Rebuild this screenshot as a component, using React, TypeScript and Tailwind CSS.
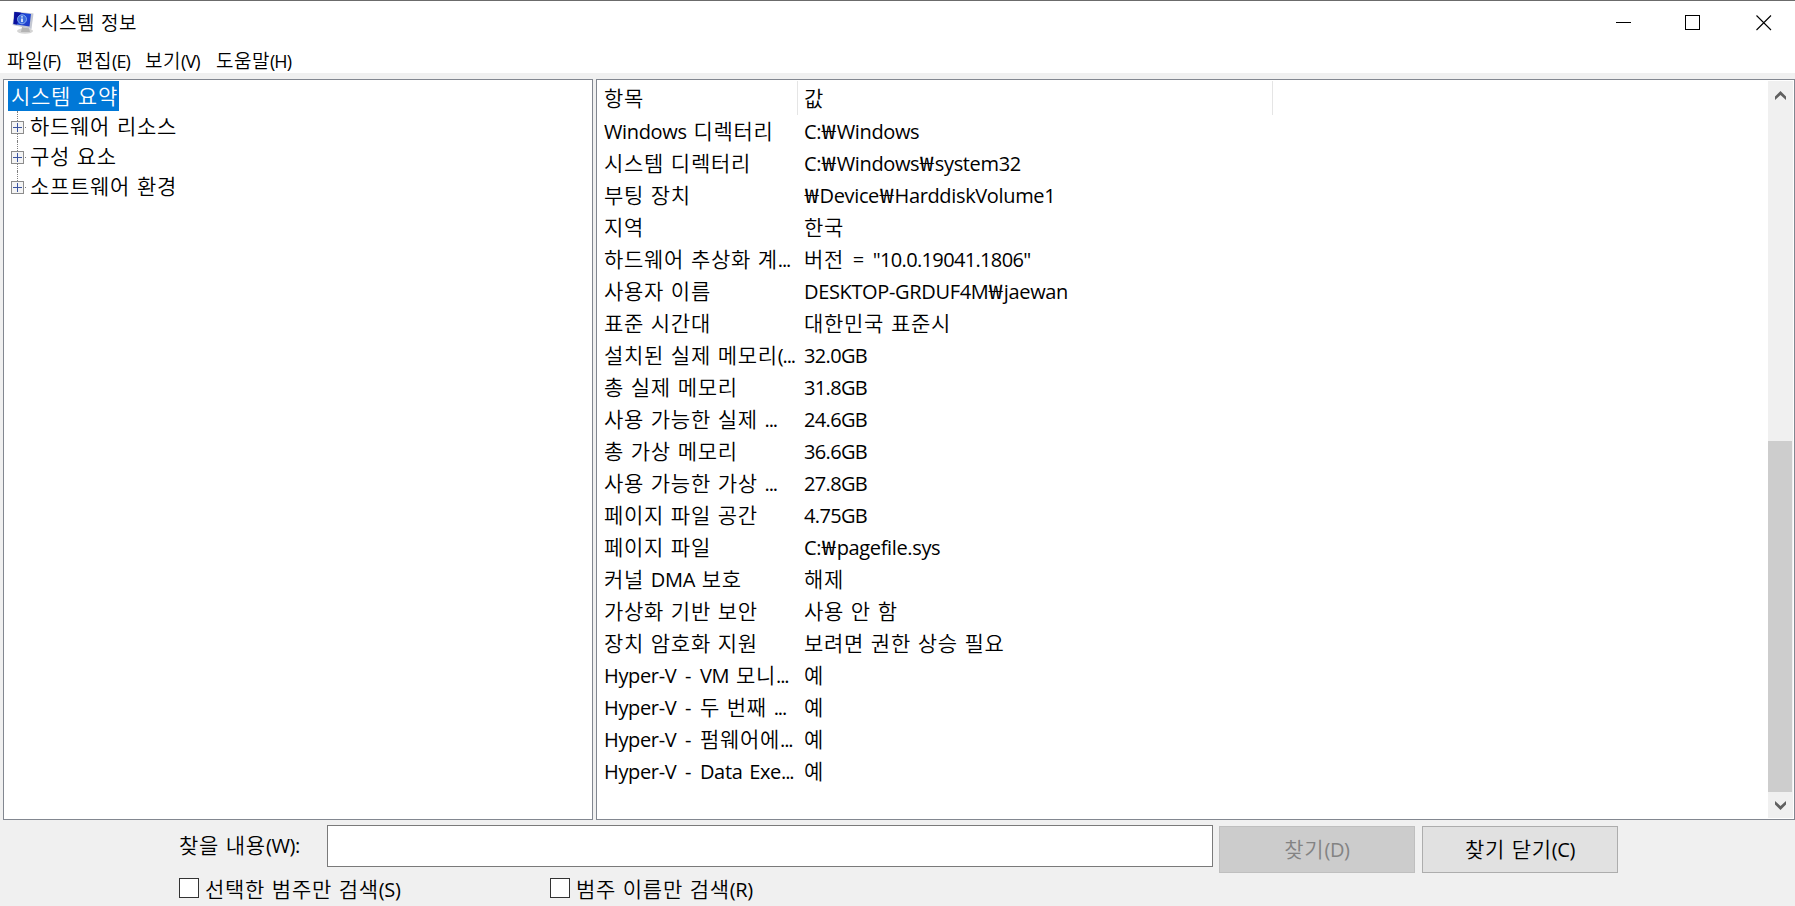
import clsx from 'clsx';

const menus = ['파일(F)', '편집(E)', '보기(V)', '도움말(H)'];
const menuWidths = ['w-[69px]', 'w-[69px]', 'w-[71px]', 'w-[90px]'];

const treeItems = ['하드웨어 리소스', '구성 요소', '소프트웨어 환경'];

const rows = [
  ['Windows 디렉터리', 'C:₩Windows'],
  ['시스템 디렉터리', 'C:₩Windows₩system32'],
  ['부팅 장치', '₩Device₩HarddiskVolume1'],
  ['지역', '한국'],
  ['하드웨어 추상화 계...', '버전 = "10.0.19041.1806"'],
  ['사용자 이름', 'DESKTOP-GRDUF4M₩jaewan'],
  ['표준 시간대', '대한민국 표준시'],
  ['설치된 실제 메모리(...', '32.0GB'],
  ['총 실제 메모리', '31.8GB'],
  ['사용 가능한 실제 ...', '24.6GB'],
  ['총 가상 메모리', '36.6GB'],
  ['사용 가능한 가상 ...', '27.8GB'],
  ['페이지 파일 공간', '4.75GB'],
  ['페이지 파일', 'C:₩pagefile.sys'],
  ['커널 DMA 보호', '해제'],
  ['가상화 기반 보안', '사용 안 함'],
  ['장치 암호화 지원', '보려면 권한 상승 필요'],
  ['Hyper-V - VM 모니...', '예'],
  ['Hyper-V - 두 번째 ...', '예'],
  ['Hyper-V - 펌웨어에...', '예'],
  ['Hyper-V - Data Exe...', '예'],
];

type TextSize = 'sm' | 'md';

const hangulStyles: Record<TextSize, string> = {
  sm: 'text-[19px] tracking-[0.5px]',
  md: 'text-[21px] tracking-[0.7px]',
};

function latinStyle(run: string, size: TextSize) {
  if (size === 'sm') return run.trim() ? 'text-[18px] tracking-[-0.9px]' : 'text-[18px] tracking-[1.3px]';
  if (!run.trim()) return 'text-[20px] tracking-[1.6px]';
  if (run === '₩') return 'inline-block w-[15.5px] scale-x-[1.25] text-center text-[20px]';
  if (run === '-' || run === '=') return 'mx-[1.8px] text-[20px]';
  if (run.endsWith('...')) return 'text-[20px] tracking-[-1.1px]';
  if (/^"?\d/.test(run)) return 'text-[20px] tracking-[-0.65px]';
  return 'text-[20px] tracking-[-0.35px]';
}

// Hangul and Latin runs have different metrics, so each gets its own span.
// Zero leading keeps the baseline tied to the parent line only.
function Text({ children, size = 'md' }: { children: string; size?: TextSize }) {
  const runs = children.match(/[가-힣]+| +|₩|\(?\.\.\.|[^가-힣₩ .]+(\.[^가-힣₩ .]+)*/g) || [];
  return (
    <span className="whitespace-pre">
      {runs.map((run, i) => (
        <span
          key={i}
          className={
            /[가-힣]/.test(run)
              ? clsx("leading-[0] [font-family:'Noto_Sans_CJK_KR_DemiLight','Noto_Sans_CJK_KR',sans-serif]", hangulStyles[size])
              : run === '₩'
                ? clsx("leading-[0] [font-family:'Noto_Sans_CJK_KR',sans-serif]", latinStyle(run, size))
                : clsx("leading-[0] [font-family:'Open_Sans',sans-serif]", latinStyle(run, size))
          }
        >
          {run}
        </span>
      ))}
    </span>
  );
}

function AppIcon() {
  return (
    <svg width="22" height="24" viewBox="0 0 22 24">
      <defs>
        <linearGradient id="screen" x1="0" y1="0" x2="1" y2="1">
          <stop offset="0" stopColor="#1020b0" />
          <stop offset="0.5" stopColor="#1c48d8" />
          <stop offset="1" stopColor="#2438c0" />
        </linearGradient>
      </defs>
      <ellipse cx="13" cy="20" rx="8" ry="2.800" fill="#d4d4d4" />
      <path d="M10 16l7 1 1 4H9z" fill="#b4b4b4" />
      <path d="M2 .5L21.500 2.500l-2 15.500L.5 14z" fill="#c4c8d2" />
      <path d="M2.500 1L19 3 17.500 15.500 1.500 13z" fill="url(#screen)" />
      <path d="M2.500 1L9 1.800 5 13.500 1.500 13z" fill="#0a109c" />
      <circle cx="10" cy="8.300" r="4.500" fill="#3c6cdc" stroke="#8cb0f0" strokeWidth="0.900" />
      <path d="M10 7.600v3.400M10 5.300v1.200" stroke="#fff" strokeWidth="1.500" />
    </svg>
  );
}

function TitleBar() {
  return (
    <header className="flex h-[44px] items-start border-t border-[#6b6b6b] bg-white">
      <div className="pt-[10px] pl-[12px]">
        <AppIcon />
      </div>
      <h1 className="h-[43px] pl-[7px] leading-[44px]">
        <Text size="sm">시스템 정보</Text>
      </h1>
      <div className="ml-auto flex gap-[54px] pt-[14px] pr-[23px]">
        <svg width="16" height="16" shapeRendering="crispEdges">
          <path d="M1 7.500h15" stroke="#000" />
        </svg>
        <svg width="17" height="16" shapeRendering="crispEdges">
          <rect x="0.500" y="0.500" width="14" height="14" fill="none" stroke="#000" />
        </svg>
        <svg width="16" height="16">
          <path d="M.5.5l14.500 14.500M15 .5L.5 15" stroke="#000" strokeWidth="1.100" />
        </svg>
      </div>
    </header>
  );
}

function ExpandBox() {
  return (
    <svg width="15" height="13" shapeRendering="crispEdges">
      <rect x="0.500" y="0.500" width="12" height="12" fill="#f4f4f4" stroke="#8c8c8c" />
      <path d="M2 6.500h9M6.500 2v9" stroke="#3c55a0" />
      <path d="M14 6.500h1" stroke="#808080" />
    </svg>
  );
}

function TreePanel() {
  return (
    <section className="w-[590px] border border-[#828790] bg-white pt-px pl-[4px]">
      <div className="h-[30px] w-[111px] bg-[#0078d7] pl-[3px] leading-[31px] text-white">
        <Text>시스템 요약</Text>
      </div>
      {treeItems.map((item) => (
        <div key={item} className="flex h-[30px]">
          <div className="flex w-[22px] flex-col pl-[3px]">
            <span className="ml-[6px] h-[10px] w-px border-l border-dotted border-[#808080]" />
            <ExpandBox />
            <span
              className={clsx(
                'ml-[6px] h-[7px] w-px border-l border-dotted border-[#808080]',
                item === treeItems[treeItems.length - 1] && 'invisible',
              )}
            />
          </div>
          <div className="leading-[31px]">
            <Text>{item}</Text>
          </div>
        </div>
      ))}
    </section>
  );
}

function ScrollBar() {
  return (
    <div className="mt-px mr-px mb-px flex w-[25px] flex-col bg-[#f0f0f0]">
      <svg width="25" height="25">
        <path d="M7 15.500L12.500 10l5.500 5.500V19l-5.500-5L7 19z" fill="#606060" />
      </svg>
      <div className="mt-[335px] h-[351px] w-[24px] bg-[#cdcdcd]" />
      <svg className="mt-auto" width="25" height="26">
        <path d="M7 9l5.500 5L18 9v3.500L12.500 18 7 12.500z" fill="#606060" />
      </svg>
    </div>
  );
}

function DetailsPanel() {
  return (
    <section className="flex w-[1199px] border border-[#828790] bg-white">
      <div className="flex-1 pt-px">
        <div className="mb-px flex h-[34px] leading-[36px]">
          <div className="w-[201px] border-r border-[#e5e5e5] pl-[7px]">
            <Text>항목</Text>
          </div>
          <div className="w-[475px] border-r border-[#e5e5e5] pl-[6px]">
            <Text>값</Text>
          </div>
        </div>
        {rows.map(([name, value]) => (
          <div key={name} className="flex h-[32px] leading-[32px]">
            <div className="w-[207px] pl-[7px]">
              <Text>{name}</Text>
            </div>
            <div>
              <Text>{value}</Text>
            </div>
          </div>
        ))}
      </div>
      <ScrollBar />
    </section>
  );
}

function CheckOption({ label, className }: { label: string; className?: string }) {
  return (
    <label className={clsx('flex items-center', className)}>
      <span className="mr-[6px] size-[20px] border border-[#333] bg-white" />
      <span className="pt-[3px] leading-[27px]">
        <Text>{label}</Text>
      </span>
    </label>
  );
}

function FindBar() {
  return (
    <footer className="pt-[5px]">
      <div className="flex h-[48px] items-start">
        <div className="h-[42px] w-[327px] pl-[179px] leading-[41px]">
          <Text>찾을 내용(W):</Text>
        </div>
        <input className="h-[42px] w-[886px] border border-[#7a7a7a] bg-white outline-none" />
        <button className="mt-px ml-[6px] h-[47px] w-[196px] border border-[#bfbfbf] bg-[#cccccc] text-[#838383]">
          <Text>찾기(D)</Text>
        </button>
        <button className="mt-px ml-[7px] h-[47px] w-[196px] border border-[#adadad] bg-[#e1e1e1]">
          <Text>찾기 닫기(C)</Text>
        </button>
      </div>
      <div className="flex h-[30px] pl-[179px]">
        <CheckOption label="선택한 범주만 검색(S)" className="w-[371px]" />
        <CheckOption label="범주 이름만 검색(R)" />
      </div>
    </footer>
  );
}

export default function App() {
  return (
    <div className="h-[906px] w-[1795px] overflow-hidden bg-[#f0f0f0] text-[20px] text-black [font-family:'Open_Sans','Noto_Sans_CJK_KR',sans-serif]">
      <TitleBar />
      <nav className="flex h-[29px] bg-white pl-[7px] leading-[33px]">
        {menus.map((menu, i) => (
          <div key={menu} className={menuWidths[i]}>
            <Text size="sm">{menu}</Text>
          </div>
        ))}
      </nav>
      <main className="mt-[6px] flex h-[741px] gap-[3px] pl-[3px]">
        <TreePanel />
        <DetailsPanel />
      </main>
      <FindBar />
    </div>
  );
}
